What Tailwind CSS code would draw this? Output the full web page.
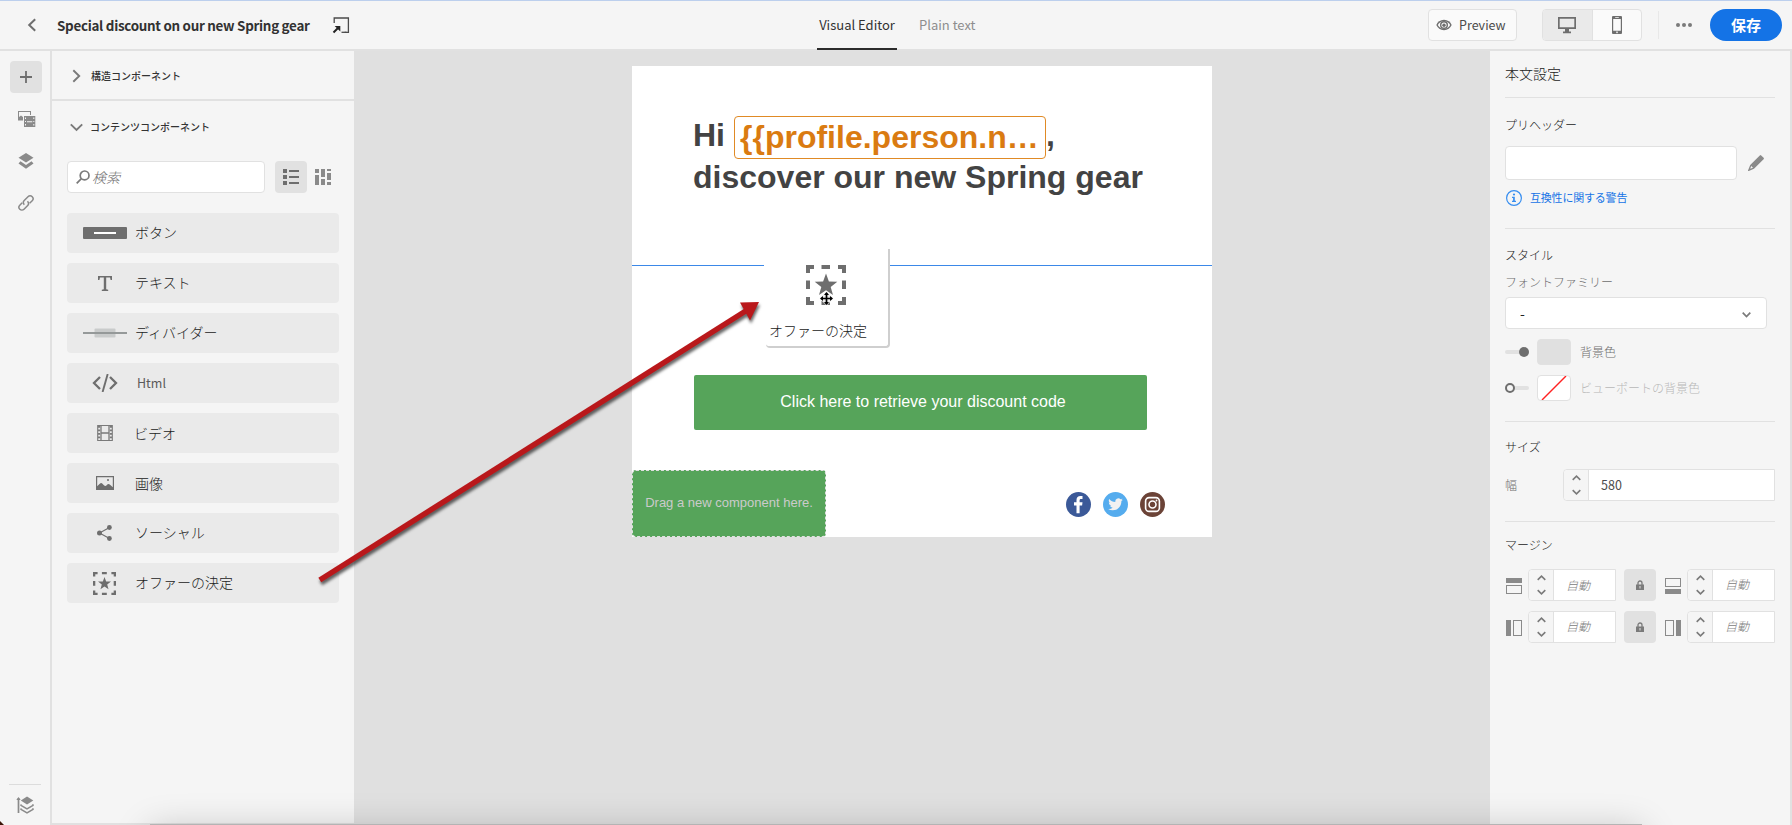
<!DOCTYPE html>
<html lang="ja">
<head>
<meta charset="utf-8">
<title>Email Designer</title>
<script src="https://cdn.jsdelivr.net/npm/@tailwindcss/browser@4"></script>
</head>
<body class="overflow-hidden">
<div class="relative flex h-[825px] w-[1792px] flex-col overflow-hidden bg-[#f5f5f5] font-['Noto_Sans_CJK_JP',sans-serif] text-[#4b4b4b]">
  <!-- Header -->
  <header class="flex h-[51px] shrink-0 items-center border-t border-b-2 border-t-[#bccfed] border-b-[#e1e1e1] whitespace-nowrap">
    <svg class="ml-[27px] h-4 w-[10px] shrink-0" viewBox="0 0 10 16" fill="none" stroke="#6e6e6e" stroke-width="2"><path d="M8.2 2.2 2.2 8l6 5.800"/></svg>
    <h1 class="ml-[20px] w-[254px] shrink-0 text-[13.400px] font-bold leading-5 tracking-[-0.280px] text-[#323232]">Special discount on our new Spring gear</h1>
    <svg class="ml-[21px] h-[18px] w-[18px] shrink-0" viewBox="0 0 18 18" fill="none" stroke="#4b4b4b" stroke-width="1.300"><path d="M2.200 7V2h14.200v14.300h-3.700"/><path d="M9.500 16.300h5" /><path d="M1.500 16.500 6 12" stroke="#222" stroke-width="2"/><path d="M2.700 10H8.300V15.500Z" fill="#222" stroke="none"/></svg>
    <nav class="ml-[467px] flex h-[50px] shrink-0 text-[13px] leading-[49px]">
      <span class="h-[50px] w-20 border-b-2 border-[#2c2c2c] text-center text-[#323232]">Visual Editor</span>
      <span class="ml-[22px] w-[58px] text-[#8e8e8e]">Plain text</span>
    </nav>
    <div class="ml-auto flex items-center">
      <button class="flex h-8 w-[89px] items-center rounded border border-[#e1e1e1] bg-[#fafafa] pl-[7px] text-[12.500px] text-[#4b4b4b]">
        <svg class="mr-[7px] h-[14px] w-4" viewBox="0 0 16 14"><path d="M8 1.800C4.400 1.800 1.600 4 .3 7 1.600 10 4.400 12.200 8 12.200S14.400 10 15.700 7C14.400 4 11.600 1.800 8 1.800Z" fill="#6e6e6e"/><path d="M8 3.200C5.200 3.200 3 4.700 1.800 7 3 9.300 5.200 10.800 8 10.800S13 9.300 14.200 7C13 4.700 10.800 3.200 8 3.200Z" fill="#fafafa"/><circle cx="8" cy="7" r="4" fill="#6e6e6e"/><circle cx="8" cy="7" r="2.600" fill="#fafafa"/><circle cx="8" cy="7.200" r="1.700" fill="#6e6e6e"/></svg>Preview</button>
      <div class="ml-[25px] flex h-8 w-[100px] overflow-hidden rounded border border-[#e1e1e1] bg-[#fafafa]">
        <span class="flex w-[50px] items-center justify-center border-r border-[#e1e1e1] bg-[#eaeaea]"><svg class="-ml-px h-[18px] w-[18px]" viewBox="0 0 18 18" fill="#6e6e6e"><path fill-rule="evenodd" d="M0 1h18v12H0ZM1.700 2.700v8.600h14.600V2.700Z"/><path d="M7 12.500h4v3h2v1.800H5v-1.800h2Z"/></svg></span>
        <span class="flex flex-1 items-center justify-center"><svg class="h-[18px] w-[10px]" viewBox="0 0 10 18" fill="#6e6e6e"><path fill-rule="evenodd" d="M1 0h8a1 1 0 0 1 1 1v16a1 1 0 0 1-1 1H1a1 1 0 0 1-1-1V1a1 1 0 0 1 1-1ZM1.200 3v11.700h7.600V3ZM3.200 1.200v.7h3.600v-.7ZM5 15.500a.8.8 0 1 0 .01 0Z"/></svg></span>
      </div>
      <i class="ml-4 h-7 w-px bg-[#e8e8e8]"></i>
      <svg class="ml-[17px] h-1 w-4" viewBox="0 0 16 4" fill="#7a7a7a"><circle cx="2" cy="2" r="2"/><circle cx="8" cy="2" r="2"/><circle cx="14" cy="2" r="2"/></svg>
      <button class="ml-[18px] mr-[10px] h-8 w-[72px] rounded-full bg-[#1473e6] text-[15px] font-bold leading-[30px] text-white">保存</button>
    </div>
  </header>

  <div class="flex min-h-0 flex-1 font-light">
    <!-- Icon rail -->
    <aside class="flex w-[52px] shrink-0 flex-col items-center border-r-2 border-[#e1e1e1] pt-[10px]">
      <div class="ml-[2px] flex h-8 w-8 items-center justify-center rounded bg-[#e1e1e1]"><svg class="h-3 w-3" viewBox="0 0 12 12" stroke="#6e6e6e" stroke-width="1.800"><path d="M6 0v12M0 6h12"/></svg></div>
      <svg class="mt-[17px] ml-[3px] h-[18px] w-[18px]" viewBox="0 0 18 18" fill="#8a8a8a"><path d="M0 1h13v4h-1V2H1v5l2-1.500L5 7v3.500H0Z"/><path fill-rule="evenodd" d="M6 6h11.300v11H6ZM7 7.500V9h1V7.500Zm0 3.500v1h1v-1Zm0 3v1.500h1V14Zm8.300-6.500V9h1V7.500Zm0 3.500v1h1v-1Zm0 3v1.500h1V14ZM9 11.200v1h5.300v-1Z"/></svg>
      <svg class="mt-[24px] ml-[2px] h-[18px] w-4" viewBox="0 0 16 18" fill="#8a8a8a"><path d="M8 1l7.500 4.800L8 10.500.5 5.800Z"/><path d="M2.500 9.300.5 11.400 8 16.800l7.500-5.400-2-2.100L8 13Z"/></svg>
      <svg class="mt-6 ml-[2px] h-[18px] w-[18px]" viewBox="0 0 18 18" fill="none" stroke="#8a8a8a" stroke-width="1.500"><path d="M7.300 10.700C5.800 9 6 7.700 7.200 6.500L11 2.700c1.200-1.200 3-1.200 4.200 0s1.200 2.800 0 4L12.600 9.300"/><path d="M10.500 7.300c1.500 1.700 1.400 3 .2 4.200L7 15.200c-1.200 1.200-3 1.200-4.200 0s-1.200-2.800 0-4l2.400-2.500"/></svg>
      <i class="mt-auto h-px w-8 bg-[#dcdcdc]"></i>
      <svg class="mt-[11px] mb-[11px] h-[18px] w-[18px]" viewBox="0 0 18 18"><path d="M2.500 2v15" stroke="#8a8a8a" stroke-width="1.700"/><path d="M.3 4 2.500 1l2.200 3Z" fill="#8a8a8a"/><path d="M11 .500 17.300 4.500 11 8.500 4.800 4.500Z" fill="#8a8a8a"/><path d="M5.200 8.300 5 9.300l6 3.600 6-3.600-.3-1" fill="none" stroke="#8a8a8a" stroke-width="1.500"/><path d="M5.200 12.300 5 13.300l6 3.600 6-3.600-.3-1" fill="none" stroke="#8a8a8a" stroke-width="1.500"/></svg>
    </aside>

    <!-- Component list -->
    <section class="flex w-[302px] shrink-0 flex-col border-b-2 border-[#e1e1e1]">
      <div class="flex h-[50px] items-center border-b-2 border-[#e1e1e1] pl-5">
        <svg class="mt-px h-[14px] w-[9px]" viewBox="0 0 9 14" fill="none" stroke="#7a7a7a" stroke-width="1.900"><path d="M1.300 1.300 7.200 7l-5.900 5.700"/></svg>
        <span class="ml-[10px] text-[10px] font-medium text-[#333]">構造コンポーネント</span>
      </div>
      <div class="flex h-[52px] items-center pl-[18px]">
        <svg class="h-[9px] w-[13px]" viewBox="0 0 13 9" fill="none" stroke="#7a7a7a" stroke-width="1.900"><path d="M.8 1.300 6.500 7l5.700-5.700"/></svg>
        <span class="ml-[7px] pb-0.5 text-[10px] font-medium text-[#333]">コンテンツコンポーネント</span>
      </div>
      <div class="mt-2 flex h-8 items-center pl-[15px]">
        <div class="flex h-8 w-[198px] items-center rounded border border-[#e1e1e1] bg-white pl-2">
          <svg class="h-[14px] w-[14px]" viewBox="0 0 14 14" fill="none" stroke="#7a7a7a" stroke-width="1.700"><circle cx="8.600" cy="5.400" r="4.400"/><path d="M5.400 8.600 .7 13.300"/></svg>
          <span class="ml-[2px] text-sm italic text-[#6e6e6e]">検索</span>
        </div>
        <div class="ml-[10px] flex h-8 w-8 items-center justify-center rounded bg-[#e1e1e1]"><svg class="h-4 w-4" viewBox="0 0 16 16" fill="#6e6e6e"><path d="M0 0h4v4H0ZM6 1h10v2H6ZM0 6h4v4H0ZM6 7h10v2H6ZM0 12h4v4H0ZM6 13h10v2H6Z"/></svg></div>
        <svg class="ml-2 h-4 w-4" viewBox="0 0 16 16" fill="#8a8a8a"><path d="M0 0h4v4H0ZM0 6h4v10H0ZM6 0h4v8H6ZM6 10h4v6H6ZM12 0h4v2h-4ZM12 4h4v7h-4ZM12 13h4v3h-4Z"/></svg>
      </div>
      <ul class="mt-5 flex flex-col gap-[10px] pl-[15px] text-sm text-[#222]">
        <li class="flex h-10 w-[272px] items-center rounded bg-[#eaeaea]"><span class="ml-4 flex w-11 justify-center"><svg class="h-3 w-11" viewBox="0 0 44 12"><rect width="44" height="12" rx="1" fill="#6e6e6e"/><path d="M11 6h22" stroke="#fff" stroke-width="2"/></svg></span><span class="ml-[8px] pb-0.5">ボタン</span></li>
        <li class="flex h-10 w-[272px] items-center rounded bg-[#eaeaea]"><span class="ml-4 flex w-11 justify-center"><svg class="h-[15px] w-[14px]" viewBox="0 0 14 15" fill="#6e6e6e"><path d="M0 0h14v4h-1.400L12 1.600H8.200v11.600l2 .5V15H3.800v-1.300l2-.5V1.600H2L1.400 4H0Z"/></svg></span><span class="ml-[8px] pb-0.5">テキスト</span></li>
        <li class="flex h-10 w-[272px] items-center rounded bg-[#eaeaea]"><span class="ml-4 flex w-11 justify-center"><svg class="h-[10px] w-11" viewBox="0 0 44 10"><rect x="11.500" y=".5" width="21" height="9" rx="1" fill="#c9cbcb"/><path d="M0 5h44" stroke="#959999" stroke-width="2"/></svg></span><span class="ml-[8px] pb-0.5">ディバイダー</span></li>
        <li class="flex h-10 w-[272px] items-center rounded bg-[#eaeaea]"><span class="ml-4 flex w-11 justify-center"><svg class="h-[18px] w-[26px]" viewBox="0 0 26 18" fill="none" stroke="#6e6e6e" stroke-width="2.300"><path d="M8 3 2 9l6 6M18 3l6 6-6 6"/><path d="M15.700 0 10.600 18" stroke-width="1.900"/></svg></span><span class="ml-[10px] text-[12.500px] font-normal text-[#5a5a5a]">Html</span></li>
        <li class="flex h-10 w-[272px] items-center rounded bg-[#eaeaea]"><span class="ml-4 flex w-11 justify-center"><svg class="h-4 w-4" viewBox="0 0 16 16" fill="none" stroke="#7a7a7a"><path d="M.7.500h14.600v15H.7Z" stroke-width="1.100"/><path d="M4 0v16M12 0v16M4 8h8" stroke-width="1.300"/><path d="M2.100 1v15M13.900 1v15" stroke-width="2.200" stroke-dasharray="1.800 1.700"/></svg></span><span class="ml-[7px]">ビデオ</span></li>
        <li class="flex h-10 w-[272px] items-center rounded bg-[#eaeaea]"><span class="ml-4 flex w-11 justify-center"><svg class="-ml-px h-[14px] w-[18px]" viewBox="0 0 18 14" fill="#6e6e6e"><path fill-rule="evenodd" d="M0 0h18v14H0ZM1.200 1.200v9.100C3 8.700 4.200 7 5.300 7c1.200 0 2.500 3 4 3 1.100 0 2-2 3.200-2 1 0 2.500 1.600 4.300 3.300V1.200Z"/><circle cx="12" cy="4" r="1"/></svg></span><span class="ml-[8px]">画像</span></li>
        <li class="flex h-10 w-[272px] items-center rounded bg-[#eaeaea]"><span class="ml-4 flex w-11 justify-center"><svg class="-ml-px h-4 w-[15px]" viewBox="0 0 15 16" fill="#6e6e6e"><path d="M12.500 2.500 2.500 8l10 5.500" fill="none" stroke="#6e6e6e" stroke-width="1.100"/><circle cx="12.400" cy="2.500" r="2.400"/><circle cx="2.500" cy="8" r="2.500"/><circle cx="12.400" cy="13.500" r="2.400"/></svg></span><span class="ml-[8px] pb-0.5">ソーシャル</span></li>
        <li class="flex h-10 w-[272px] items-center rounded bg-[#eaeaea]"><span class="ml-4 flex w-11 justify-center"><svg class="-ml-px h-[23px] w-[23px]" viewBox="0 0 40 40"><path d="M2 8V2h6M15.500 2h8.500M32 2h6v6M38 15.500v8.500M38 32v6h-6M24 38h-8.500M8 38H2v-6M2 24v-8.500" fill="none" stroke="#6e6e6e" stroke-width="4"/><path d="m20 8.500 2.900 7.900 8.400.3-6.600 5.200 2.300 8.100-7-4.700-7 4.700 2.300-8.100-6.600-5.200 8.400-.3Z" fill="#6e6e6e"/></svg></span><span class="ml-[8px] pb-0.5">オファーの決定</span></li>
      </ul>
    </section>

    <!-- Canvas -->
    <main class="relative w-[1136px] shrink-0 bg-[#e0e0e0] pt-[15px] pl-[278px]">
      <div class="h-[471px] w-[580px] bg-white font-['Liberation_Sans',Arial,sans-serif] font-normal">
        <div class="h-[199px] pt-[50px] pl-[61px] text-[32px] font-bold text-[#434343]">
          <div class="flex h-[43px] leading-[39px]"><span class="w-[41px]">Hi</span><span class="h-[43px] w-[312px] rounded border border-[#e08a25] pl-[5px] leading-[40px] whitespace-nowrap text-[#da7b11]">{{profile.person.n…</span><span>,</span></div>
          <div class="leading-[36px] whitespace-nowrap">discover our new Spring gear</div>
        </div>
        <div class="h-px bg-[#3b88e8]"></div>
        <div class="mt-[109px] ml-[62px] h-[55px] w-[453px] rounded-[2px] bg-[#56a45a] pl-[5px] text-center text-[16px] leading-[54px] text-white">Click here to retrieve your discount code</div>
        <div class="mt-10 flex h-[67px] items-center">
          <div class="h-[67px] w-[194px] rounded border border-dashed border-[#e0e0e0] bg-[#56a45a] text-center text-[13px] leading-[63px] text-[#cbcbcb]">Drag a new component here.</div>
          <div class="ml-[240px] flex gap-3 pt-[1px]">
            <svg class="h-[25px] w-[25px]" viewBox="0 0 25 25"><circle cx="12.500" cy="12.500" r="12.500" fill="#3b5998"/><path d="M10.500 21.300v-7.800H8v-3.200h2.500V8c0-2.800 1.600-4 3.900-4 1 0 1.800.1 2.100.1v2.800h-1.400c-1.300 0-1.500.7-1.500 1.600v1.800h2.900l-.4 3.200h-2.500v7.800Z" fill="#fff"/></svg>
            <svg class="h-[25px] w-[25px]" viewBox="0 0 25 25"><circle cx="12.500" cy="12.500" r="12.500" fill="#55acee"/><path transform="translate(5.200 5) scale(.61)" d="M23.950 4.570a10 10 0 0 1-2.820.770 4.960 4.960 0 0 0 2.160-2.720c-.95.550-2 .950-3.130 1.180a4.920 4.920 0 0 0-8.380 4.480C7.690 8.100 4.070 6.130 1.640 3.160a4.820 4.820 0 0 0-.67 2.480c0 1.710.87 3.210 2.190 4.100a4.900 4.900 0 0 1-2.230-.620v.06a4.920 4.920 0 0 0 3.950 4.830 5 5 0 0 1-2.210.080 4.940 4.940 0 0 0 4.600 3.420A9.870 9.870 0 0 1 0 19.540a13.990 13.990 0 0 0 7.560 2.210c9.050 0 14-7.500 14-13.980 0-.21 0-.42-.02-.63a9.940 9.940 0 0 0 2.460-2.550Z" fill="#f1f1f1"/></svg>
            <svg class="h-[25px] w-[25px]" viewBox="0 0 25 25"><circle cx="12.500" cy="12.500" r="12.500" fill="#6b4337"/><rect x="5.600" y="5.600" width="13.800" height="13.800" rx="3.500" fill="none" stroke="#fff" stroke-width="1.600"/><circle cx="12.500" cy="12.500" r="3.500" fill="none" stroke="#fff" stroke-width="1.600"/><circle cx="16.500" cy="8.500" r=".9" fill="#fff"/></svg>
          </div>
        </div>
      </div>
      <!-- Component being dragged -->
      <div class="absolute top-[198px] left-[410px] h-[98px] w-[125px] rounded-br bg-white"></div>
      <div class="absolute top-[198px] left-[412px] h-[99px] w-[124px] rounded-b border-r-2 border-b-2 border-[#cfcfcf] bg-white pt-[16px] text-sm whitespace-nowrap text-[#222]">
        <svg class="ml-[40px] h-10 w-10" viewBox="0 0 40 40"><path d="M2 8V2h6M15.500 2h8.500M32 2h6v6M38 15.500v8.500M38 32v6h-6M24 38h-8.500M8 38H2v-6M2 24v-8.500" fill="none" stroke="#6e6e6e" stroke-width="4"/><path d="m20 8.500 2.900 7.900 8.400.3-6.600 5.200 2.300 8.100-7-4.700-7 4.700 2.300-8.100-6.600-5.200 8.400-.3Z" fill="#6e6e6e"/></svg>
        <div class="mt-[15px] ml-[3px] leading-5">オファーの決定</div>
        <svg class="absolute top-[42px] left-[53px] h-[15px] w-[15px]" viewBox="0 0 15 15"><path d="M7.500.5 14.500 7.500l-7 7-7-7Z" fill="#eee"/><path d="M7.500 2v11M2 7.500h11" stroke="#000" stroke-width="1.700"/><path d="M7.500 1 10 4H5ZM7.500 14 5 11h5ZM1 7.500 4 5v5ZM14 7.500 11 10V5Z"/></svg>
      </div>
    </main>

    <!-- Body settings -->
    <aside class="flex w-[302px] shrink-0 flex-col border-r-2 border-[#e1e1e1] pr-[15px] pl-[15px] text-xs text-[#222]">
      <div class="h-[46px] pt-[12px] text-sm leading-5">本文設定</div>
      <i class="h-px bg-[#e1e1e1]"></i>
      <div class="mt-[17px] leading-5">プリヘッダー</div>
      <div class="mt-[11px] flex items-center">
        <div class="h-[34px] w-[232px] rounded border border-[#e1e1e1] bg-white"></div>
        <svg class="ml-[11px] h-4 w-4" viewBox="0 0 16 16" fill="#8a8a8a"><path d="M11.800.4a1 1 0 0 1 1.400 0l2.400 2.400a1 1 0 0 1 0 1.400L6 13.800.8 16a.5.5 0 0 1-.7-.7L2.200 10ZM3.200 11 2.200 13.800 5 12.800Z" fill-rule="evenodd"/></svg>
      </div>
      <div class="mt-2 flex h-5 items-center text-[#378ef0]">
        <svg class="ml-px h-4 w-4" viewBox="0 0 16 16"><circle cx="8" cy="8" r="7.400" fill="none" stroke="#378ef0" stroke-width="1.200"/><circle cx="8" cy="4.500" r="1.100" fill="#378ef0"/><path d="M6 6.800h2.800v4H10v1.200H6v-1.200h1.100V8H6Z" fill="#378ef0"/></svg>
        <span class="ml-[8px] pb-0.5 text-[11px] font-normal tracking-[-0.200px] text-[#1473e6]">互換性に関する警告</span>
      </div>
      <i class="mt-5 h-px bg-[#e1e1e1]"></i>
      <div class="mt-4 leading-5">スタイル</div>
      <div class="mt-[7px] leading-5 text-[#6e6e6e]">フォントファミリー</div>
      <div class="mt-[5px] flex h-8 w-[262px] shrink-0 items-center justify-between rounded border border-[#e1e1e1] bg-white pr-[15px] pl-[14px] text-sm"><span class="font-normal">-</span><svg class="mt-1 h-[6px] w-[9px]" viewBox="0 0 9 6" fill="none" stroke="#7a7a7a" stroke-width="1.700"><path d="M.7.700 4.500 4.500 8.300.7"/></svg></div>
      <div class="mt-[10px] flex h-[26px] items-center">
        <span class="flex h-[10px] w-6 items-center"><i class="h-1 w-[14px] rounded-l bg-[#e1e1e1]"></i><i class="h-[10px] w-[10px] rounded-full bg-[#6e6e6e]"></i></span>
        <span class="ml-2 h-[26px] w-[34px] rounded border border-[#e1e1e1] bg-[#e0e0e0]"></span>
        <span class="ml-[9px] text-[#6e6e6e]">背景色</span>
      </div>
      <div class="mt-[10px] flex h-[26px] items-center">
        <span class="flex h-[10px] w-6 items-center"><i class="h-[10px] w-[10px] rounded-full border-2 border-[#6e6e6e] bg-[#f5f5f5]"></i><i class="h-1 w-[14px] rounded-r bg-[#e1e1e1]"></i></span>
        <span class="ml-2 h-[26px] w-[34px] rounded border border-[#e1e1e1] bg-white"><svg class="h-6 w-8" viewBox="0 0 32 24"><path d="M4 24 28 0" stroke="#f22" stroke-width="1.400"/></svg></span>
        <span class="ml-[9px] text-[#b8b8b8]">ビューポートの背景色</span>
      </div>
      <i class="mt-5 h-px bg-[#e1e1e1]"></i>
      <div class="mt-[15px] leading-5">サイズ</div>
      <div class="mt-3 flex h-8 items-center">
        <span class="w-[58px] text-[#6e6e6e]">幅</span>
        <div class="flex h-8 w-[212px] items-center rounded-l border border-[#e1e1e1] bg-white">
          <span class="flex h-[30px] w-[25px] items-center justify-center rounded-l border-r border-[#e1e1e1] bg-[#f5f5f5]"><svg class="h-5 w-[9px]" viewBox="0 0 9 20" fill="none" stroke="#7a7a7a" stroke-width="1.600"><path d="M.7 4.800 4.500 1.200 8.300 4.800M.7 15.200 4.500 18.800 8.300 15.200"/></svg></span>
          <span class="ml-3 text-[12.500px] font-normal text-[#4b4b4b]">580</span>
        </div>
      </div>
      <i class="mt-5 h-px bg-[#e1e1e1]"></i>
      <div class="mt-[13px] leading-5">マージン</div>
      <div class="mt-[14px] flex h-8 items-center">
        <svg class="mt-0.5 ml-px h-4 w-4" viewBox="0 0 16 16"><rect width="16" height="5" fill="#8a8a8a"/><rect x=".5" y="7.500" width="15" height="8" fill="none" stroke="#8a8a8a"/></svg>
        <div class="ml-[6px] flex h-8 w-[88px] items-center rounded-l border border-[#e1e1e1] bg-white">
          <span class="flex h-[30px] w-[25px] items-center justify-center rounded-l border-r border-[#e1e1e1] bg-[#f5f5f5]"><svg class="h-5 w-[9px]" viewBox="0 0 9 20" fill="none" stroke="#7a7a7a" stroke-width="1.600"><path d="M.7 4.800 4.500 1.200 8.300 4.800M.7 15.200 4.500 18.800 8.300 15.200"/></svg></span>
          <span class="ml-[12px] italic text-[#808080]">自動</span>
        </div>
        <span class="ml-2 flex h-8 w-8 items-center justify-center rounded bg-[#e1e1e1]"><svg class="h-[10px] w-2" viewBox="0 0 8 10"><path d="M2 5V3a2 2 0 0 1 4 0v2" fill="none" stroke="#7a7a7a" stroke-width="1.300"/><path d="M0 4.500h8V10H0ZM3.500 6v2.500h1V6Z" fill="#7a7a7a" fill-rule="evenodd"/></svg></span>
        <svg class="mt-0.5 ml-[9px] h-4 w-4" viewBox="0 0 16 16"><rect y="11" width="16" height="5" fill="#8a8a8a"/><rect x=".5" y=".5" width="15" height="8" fill="none" stroke="#8a8a8a"/></svg>
        <div class="ml-[6px] flex h-8 w-[88px] items-center rounded-l border border-[#e1e1e1] bg-white">
          <span class="flex h-[30px] w-[25px] items-center justify-center rounded-l border-r border-[#e1e1e1] bg-[#f5f5f5]"><svg class="h-5 w-[9px]" viewBox="0 0 9 20" fill="none" stroke="#7a7a7a" stroke-width="1.600"><path d="M.7 4.800 4.500 1.200 8.300 4.800M.7 15.200 4.500 18.800 8.300 15.200"/></svg></span>
          <span class="ml-[12px] pb-0.5 italic text-[#808080]">自動</span>
        </div>
      </div>
      <div class="mt-[10px] flex h-8 items-center">
        <svg class="mt-0.5 ml-px h-4 w-4" viewBox="0 0 16 16"><rect width="5" height="16" fill="#8a8a8a"/><rect x="7.500" y=".5" width="8" height="15" fill="none" stroke="#8a8a8a"/></svg>
        <div class="ml-[6px] flex h-8 w-[88px] items-center rounded-l border border-[#e1e1e1] bg-white">
          <span class="flex h-[30px] w-[25px] items-center justify-center rounded-l border-r border-[#e1e1e1] bg-[#f5f5f5]"><svg class="h-5 w-[9px]" viewBox="0 0 9 20" fill="none" stroke="#7a7a7a" stroke-width="1.600"><path d="M.7 4.800 4.500 1.200 8.300 4.800M.7 15.200 4.500 18.800 8.300 15.200"/></svg></span>
          <span class="ml-[12px] pb-0.5 italic text-[#808080]">自動</span>
        </div>
        <span class="ml-2 flex h-8 w-8 items-center justify-center rounded bg-[#e1e1e1]"><svg class="h-[10px] w-2" viewBox="0 0 8 10"><path d="M2 5V3a2 2 0 0 1 4 0v2" fill="none" stroke="#7a7a7a" stroke-width="1.300"/><path d="M0 4.500h8V10H0ZM3.500 6v2.500h1V6Z" fill="#7a7a7a" fill-rule="evenodd"/></svg></span>
        <svg class="mt-0.5 ml-[9px] h-4 w-4" viewBox="0 0 16 16"><rect x="11" width="5" height="16" fill="#8a8a8a"/><rect x=".5" y=".5" width="8" height="15" fill="none" stroke="#8a8a8a"/></svg>
        <div class="ml-[6px] flex h-8 w-[88px] items-center rounded-l border border-[#e1e1e1] bg-white">
          <span class="flex h-[30px] w-[25px] items-center justify-center rounded-l border-r border-[#e1e1e1] bg-[#f5f5f5]"><svg class="h-5 w-[9px]" viewBox="0 0 9 20" fill="none" stroke="#7a7a7a" stroke-width="1.600"><path d="M.7 4.800 4.500 1.200 8.300 4.800M.7 15.200 4.500 18.800 8.300 15.200"/></svg></span>
          <span class="ml-[12px] pb-0.5 italic text-[#808080]">自動</span>
        </div>
      </div>
    </aside>
  </div>

  <!-- Arrow from the list entry to the drop place -->
  <svg class="pointer-events-none absolute top-[290px] left-[310px] h-[300px] w-[460px] drop-shadow-[1px_3px_1.500px_rgba(0,0,0,0.6)]" viewBox="310 290 460 300"><path d="M319.800 580 748 309.500" stroke="#b9181b" stroke-width="5.500"/><path d="M759 302 740 302.500 750 320.500Z" fill="#b9181b"/></svg>
  <!-- Shadow under the window -->
  <div class="pointer-events-none absolute top-[824px] left-[150px] h-10 w-[1492px] bg-[#b4b4b4] shadow-[0_6px_36px_rgba(0,0,0,0.22)]"></div>
  <svg class="absolute bottom-0 left-0 h-1 w-1" viewBox="0 0 4 4"><path d="M0 0 4 4H0Z" fill="#3a1508"/></svg>
</div>
</body>
</html>
